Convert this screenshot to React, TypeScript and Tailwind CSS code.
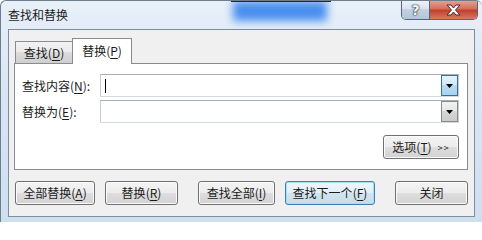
import React from "react";

// Win7 style push button
function Btn({ w, children, primary }: { w: string; children: React.ReactNode; primary?: boolean }) {
  const base =
    "h-[24px] flex items-center justify-center rounded-[3px] border leading-none text-[12px] text-[#1b1b1b]";
  const skin = primary
    ? "border-[#3c7fb1] bg-[linear-gradient(#eef6fb,#e3eff6_50%,#d3e5ef_50%,#c7dce8)] shadow-[inset_0_0_0_1px_#a6e0f5]"
    : "border-[#707070] bg-[linear-gradient(#f4f4f4,#ececec_50%,#dedede_50%,#d2d2d2)] shadow-[inset_0_0_0_1px_#fbfbfb]";
  return <div className={`${base} ${skin} ${w}`}>{children}</div>;
}

function Key({ k }: { k: string }) {
  return (
    <>
      (<span className="underline underline-offset-[2px] decoration-1">{k}</span>)
    </>
  );
}

function ComboBox({ active, caret }: { active?: boolean; caret?: boolean }) {
  return (
    <div className="w-[359px] h-[23px] flex border border-[#abadb3] border-b-[#d5dbe2] border-x-[#c9ccd4] bg-white">
      <div className="flex-1 flex items-center pl-[4px]">
        {caret && <div className="w-[1px] h-[14px] bg-black" />}
      </div>
      <div
        className={`w-[17px] flex items-center justify-center border ${
          active
            ? "border-[#3c6e91] bg-[linear-gradient(#e4f3fb,#cfe8f6_50%,#b7dcf1_50%,#a9d3ec)]"
            : "border-[#8a8a8a] bg-[linear-gradient(#f2f2f2,#e6e6e6_50%,#d6d6d6_50%,#cbcbcb)]"
        }`}
      >
        <svg width="7" height="4" viewBox="0 0 7 4">
          <path d="M0 0h7L3.5 4z" fill="#000" />
        </svg>
      </div>
    </div>
  );
}

export default function App() {
  return (
    <div className="relative w-[482px] h-[222px] overflow-hidden flex flex-col rounded-t-[6px] border-l border-t border-[#6f7d8c] bg-[linear-gradient(#e8f0f9,#d9e6f4_40%,#cfdff0)] font-['Noto_Sans_CJK_SC',sans-serif] text-[12px] text-[#1b1b1b]">
      {/* aero glass shows what lies behind the title bar */}
      <div className="absolute left-[232px] top-0 w-[94px] h-[20px] bg-[#4a8ff0] blur-[4px]" />
      <div className="absolute left-[230px] top-0 w-[100px] h-[1px] bg-[#1e2b3a]" />

      {/* title bar */}
      <div className="relative h-[28px] flex items-start justify-between pl-[7px] pr-[4px]">
        <span className="mt-[5px] leading-[18px] text-[12px]">查找和替换</span>
        <div className="flex h-[20px] -mt-px rounded-b-[5px] border border-t-0 border-[#56657a] overflow-hidden">
          <div className="w-[28px] flex items-center justify-center border-r border-[#56657a] bg-[linear-gradient(#eef3f9,#d8e2ee_50%,#c3d1e1_50%,#b4c5d8)]">
            <span className="font-['DejaVu_Sans',sans-serif] font-bold text-[14px] leading-none text-[#f4f4f4] [text-shadow:0_0_1px_#2d3a48,0_0_1px_#2d3a48,0_0_2px_#2d3a48]">
              ?
            </span>
          </div>
          <div className="w-[47px] flex items-center justify-center bg-[linear-gradient(#e8a598,#d4705f_45%,#c2402c_55%,#d77a62)]">
            <svg width="15" height="12" viewBox="0 0 15 12">
              <path
                d="M1 1h4l2.5 3 2.5-3h4l-4.5 5 4.5 5h-4l-2.5-3-2.5 3h-4l4.5-5z"
                fill="#fff"
                stroke="#4a2a26"
                strokeWidth="1"
                strokeLinejoin="round"
              />
            </svg>
          </div>
        </div>
      </div>

      {/* client area */}
      <div className="mx-[7px] mb-[5px] flex-1 flex flex-col border border-[#7f8d9c] bg-[#f0f0f0]">
        {/* tabs */}
        <div className="ml-[6px] mt-[8px] h-[25px] flex items-end">
          <div className="w-[58px] h-[22px] flex items-center justify-center border border-b-0 border-[#898c95] bg-[linear-gradient(#f2f2f2,#ebebeb_50%,#dddddd_50%,#cfcfcf)]">
            查找<Key k="D" />
          </div>
          <div className="relative z-10 -ml-px -mb-px w-[60px] h-[26px] flex items-center justify-center pb-[1px] border border-b-0 border-[#898c95] bg-white">
            替换<Key k="P" />
          </div>
        </div>

        {/* tab page */}
        <div className="ml-[5px] w-[454px] h-[107px] flex flex-col border border-[#898c95] bg-white">
          <div className="mt-[10px] ml-[7px] flex items-center">
            <span className="w-[78px]">
              查找内容<Key k="N" />:
            </span>
            <ComboBox active caret />
          </div>
          <div className="mt-[3px] ml-[7px] flex items-center">
            <span className="w-[78px]">
              替换为<Key k="E" />:
            </span>
            <ComboBox />
          </div>
          <div className="mt-[12px] mr-[8px] flex justify-end">
            <Btn w="w-[76px]">
              选项<Key k="T" />
              <span className="ml-[6px] text-[9px] tracking-[1px]">&gt;&gt;</span>
            </Btn>
          </div>
        </div>

        {/* bottom buttons */}
        <div className="ml-[6px] mt-[11px] flex">
          <Btn w="w-[80px]">
            全部替换<Key k="A" />
          </Btn>
          <div className="ml-[10px]">
            <Btn w="w-[73px]">
              替换<Key k="R" />
            </Btn>
          </div>
          <div className="ml-[20px]">
            <Btn w="w-[77px]">
              查找全部<Key k="I" />
            </Btn>
          </div>
          <div className="ml-[10px]">
            <Btn w="w-[90px]" primary>
              查找下一个<Key k="F" />
            </Btn>
          </div>
          <div className="ml-[20px]">
            <Btn w="w-[73px]">关闭</Btn>
          </div>
        </div>
      </div>
    </div>
  );
}
